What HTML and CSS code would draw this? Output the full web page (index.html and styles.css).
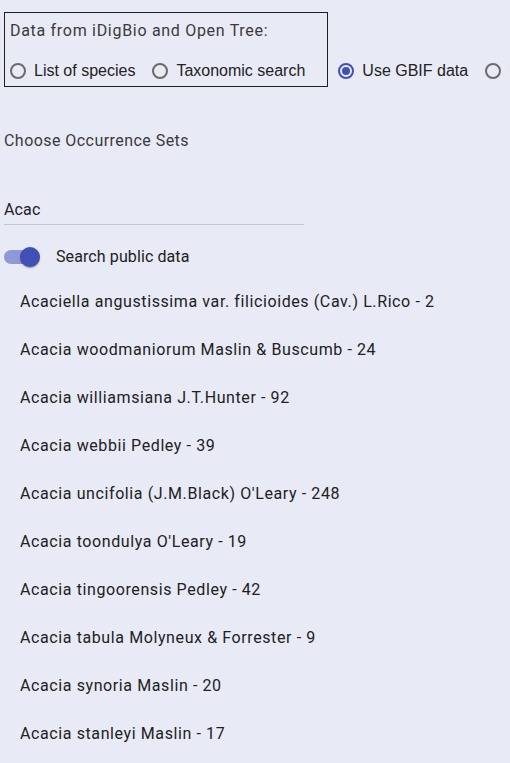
FILE: index.html
```html
<!DOCTYPE html>
<html>
<head>
<meta charset="utf-8">
<link rel="stylesheet" href="styles.css">
</head>
<body>
<div class="page">
  <div class="source-row">
    <div class="source-box">
      <div class="source-title">Data from iDigBio and Open Tree:</div>
      <div class="radio-line">
        <label class="radio"><span class="dot"></span><span class="radio-text">List of species</span></label>
        <label class="radio"><span class="dot"></span><span class="radio-text">Taxonomic search</span></label>
      </div>
    </div>
    <div class="radio-line outer">
      <label class="radio"><span class="dot checked"></span><span class="radio-text">Use GBIF data</span></label>
      <label class="radio"><span class="dot"></span><span class="radio-text">Use local data</span></label>
    </div>
  </div>

  <div class="section-title">Choose Occurrence Sets</div>

  <div class="search-field">Acac</div>

  <div class="switch-row">
    <span class="switch"><span class="track"></span><span class="thumb"></span></span>
    <span class="switch-label">Search public data</span>
  </div>

  <ul class="results">
    <li>Acaciella angustissima var. filicioides (Cav.) L.Rico - 2</li>
    <li>Acacia woodmaniorum Maslin &amp; Buscumb - 24</li>
    <li>Acacia williamsiana J.T.Hunter - 92</li>
    <li>Acacia webbii Pedley - 39</li>
    <li>Acacia uncifolia (J.M.Black) O'Leary - 248</li>
    <li>Acacia toondulya O'Leary - 19</li>
    <li>Acacia tingoorensis Pedley - 42</li>
    <li>Acacia tabula Molyneux &amp; Forrester - 9</li>
    <li>Acacia synoria Maslin - 20</li>
    <li>Acacia stanleyi Maslin - 17</li>
  </ul>
</div>
</body>
</html>
```

FILE: styles.css
```css
html, body {
  margin: 0;
  padding: 0;
  background: #e8eaf6;
  overflow: hidden;
  height: 100%;
}
.page {
  padding: 12px 4px 0 4px;
  font-family: Roboto, "Liberation Sans", sans-serif;
  color: #212121;
  font-size: 16px;
  line-height: 24px;
}
.source-row {
  display: flex;
  align-items: flex-end;
  white-space: nowrap;
  width: 700px;
}
.source-box {
  border: 1px solid #1f1f1f;
  padding: 6px 5px 3px 5px;
  flex: none;
}
.source-title {
  color: #3a3a3a;
  letter-spacing: 0.7px;
}
.radio-line {
  display: flex;
  margin-top: 16px;
}
.radio-line.outer {
  margin-top: 0;
  padding-bottom: 4px;
  padding-left: 10px;
}
.radio {
  display: flex;
  align-items: center;
  margin-right: 17px;
  font-family: "Liberation Sans", Arial, sans-serif;
  color: #222;
}
.dot {
  width: 16px;
  height: 16px;
  box-sizing: border-box;
  border: 2px solid #6b6b6b;
  border-radius: 50%;
  margin-right: 8px;
  position: relative;
  flex: none;
}
.dot.checked {
  border-color: #3f51b5;
}
.dot.checked::after {
  content: "";
  position: absolute;
  left: 2px;
  top: 2px;
  width: 8px;
  height: 8px;
  border-radius: 50%;
  background: #3f51b5;
}
.section-title {
  margin-top: 42px;
  color: #3a3a3a;
  letter-spacing: 0.45px;
}
.search-field {
  margin-top: 45px;
  width: 300px;
  padding-bottom: 2px;
  border-bottom: 1px solid #c5c6cf;
  letter-spacing: 0.15px;
}
.switch-row {
  margin-top: 20px;
  display: flex;
  align-items: center;
  height: 24px;
}
.switch {
  position: relative;
  width: 36px;
  height: 20px;
  flex: none;
}
.track {
  position: absolute;
  left: 0;
  top: 3px;
  width: 34px;
  height: 14px;
  border-radius: 7px;
  background: #8f99d6;
}
.thumb {
  position: absolute;
  left: 16px;
  top: 0;
  width: 20px;
  height: 20px;
  border-radius: 50%;
  background: #3f51b5;
  box-shadow: 0 2px 1px -1px rgba(0,0,0,.2), 0 1px 1px 0 rgba(0,0,0,.14), 0 1px 3px 0 rgba(0,0,0,.12);
}
.switch-label {
  margin-left: 16px;
  letter-spacing: 0.1px;
}
.results {
  list-style: none;
  margin: 9px 0 0 0;
  padding: 0;
}
.results li {
  height: 48px;
  line-height: 48px;
  padding: 0 16px;
  letter-spacing: 0.6px;
  white-space: nowrap;
}
```
